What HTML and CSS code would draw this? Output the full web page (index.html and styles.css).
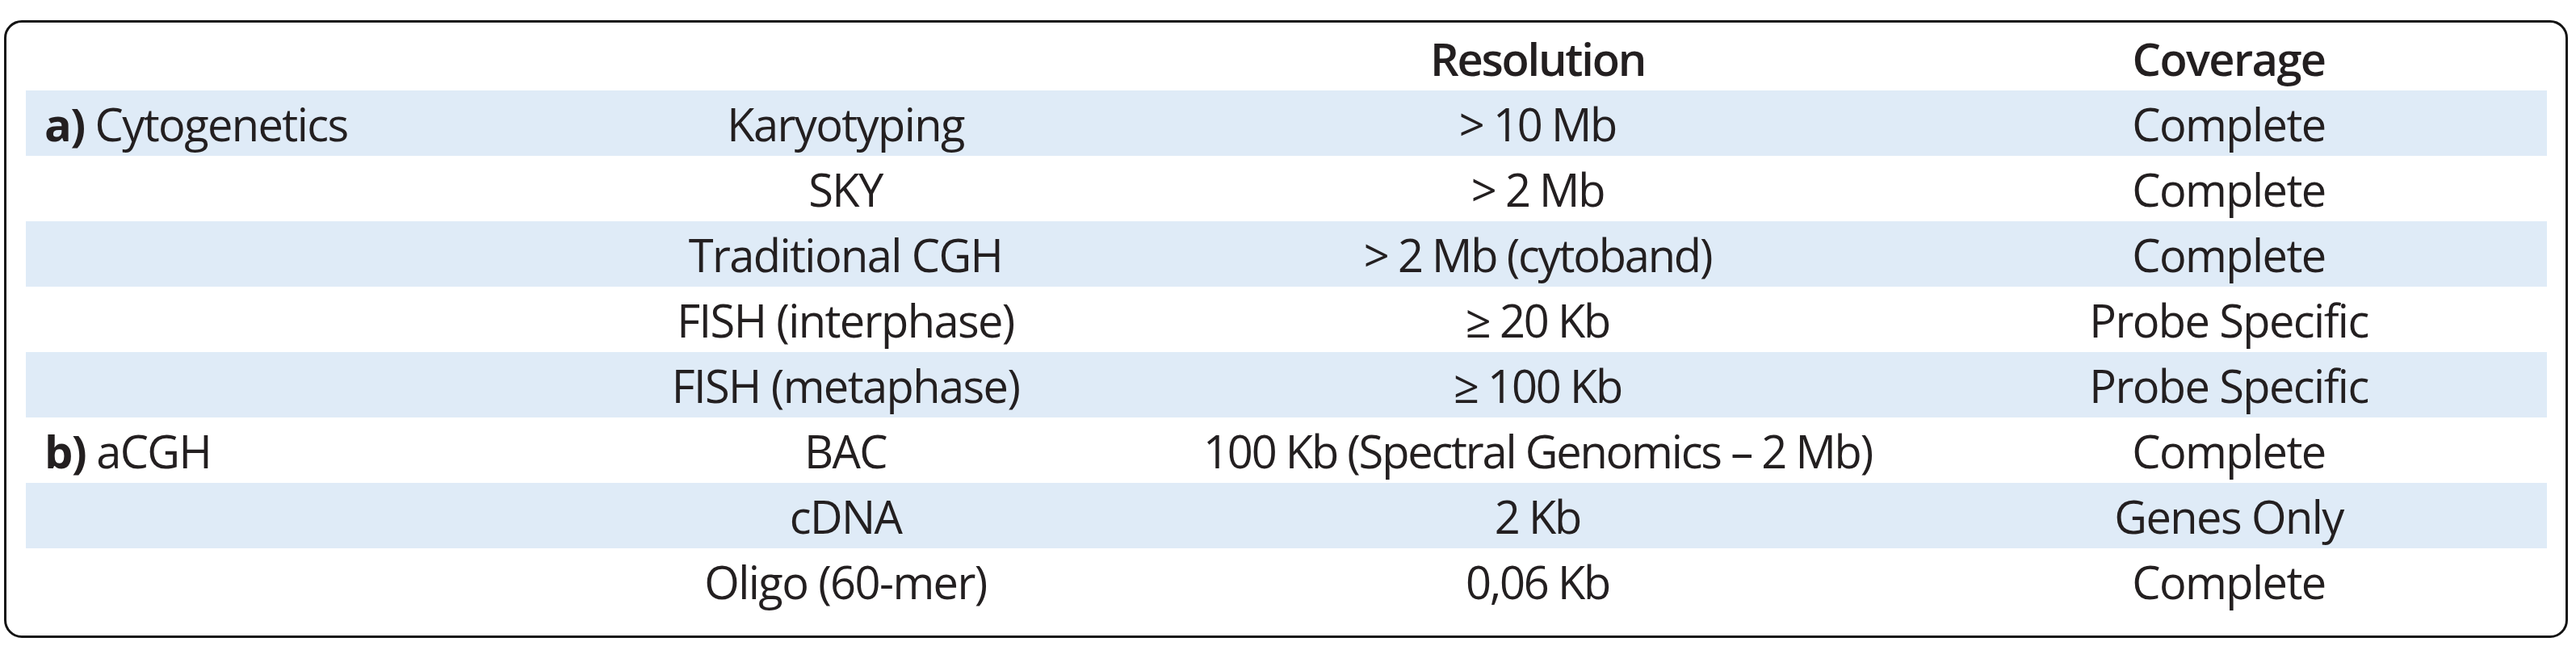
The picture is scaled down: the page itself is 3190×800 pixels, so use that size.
FILE: index.html
```html
<!DOCTYPE html>
<html lang="en">
<head>
<meta charset="utf-8">
<title>Resolution and coverage of techniques</title>
<link rel="stylesheet" href="styles.css">
</head>
<body>
<div class="frame">
  <table class="grid">
    <colgroup>
      <col class="c-group">
      <col class="c-tech">
      <col class="c-res">
      <col class="c-cov">
    </colgroup>
    <thead>
      <tr class="head">
        <th class="group"></th>
        <th class="tech"></th>
        <th class="res">Resolution</th>
        <th class="cov">Coverage</th>
      </tr>
    </thead>
    <tbody>
      <tr class="band">
        <td class="group"><b>a)</b> Cytogenetics</td>
        <td class="tech">Karyotyping</td>
        <td class="res">&gt; 10 Mb</td>
        <td class="cov">Complete</td>
      </tr>
      <tr>
        <td class="group"></td>
        <td class="tech">SKY</td>
        <td class="res">&gt; 2 Mb</td>
        <td class="cov">Complete</td>
      </tr>
      <tr class="band">
        <td class="group"></td>
        <td class="tech">Traditional CGH</td>
        <td class="res">&gt; 2 Mb (cytoband)</td>
        <td class="cov">Complete</td>
      </tr>
      <tr>
        <td class="group"></td>
        <td class="tech">FISH (interphase)</td>
        <td class="res">≥ 20 Kb</td>
        <td class="cov">Probe Specific</td>
      </tr>
      <tr class="band">
        <td class="group"></td>
        <td class="tech">FISH (metaphase)</td>
        <td class="res">≥ 100 Kb</td>
        <td class="cov">Probe Specific</td>
      </tr>
      <tr>
        <td class="group"><b>b)</b> aCGH</td>
        <td class="tech">BAC</td>
        <td class="res">100 Kb (Spectral Genomics – 2 Mb)</td>
        <td class="cov">Complete</td>
      </tr>
      <tr class="band">
        <td class="group"></td>
        <td class="tech">cDNA</td>
        <td class="res">2 Kb</td>
        <td class="cov">Genes Only</td>
      </tr>
      <tr>
        <td class="group"></td>
        <td class="tech">Oligo (60-mer)</td>
        <td class="res">0,06 Kb</td>
        <td class="cov">Complete</td>
      </tr>
    </tbody>
  </table>
</div>
</body>
</html>
```

FILE: styles.css
```css
html, body {
  margin: 0;
  padding: 0;
  background: #ffffff;
}

body {
  font-family: "Open Sans", "Noto Sans", "DejaVu Sans", sans-serif;
  color: #231f20;
}

.frame {
  box-sizing: border-box;
  width: 3175px;
  height: 765px;
  margin: 25px 0 0 5px;
  padding: 4px 21px 0 24px;
  border: 3px solid #141414;
  border-radius: 22px;
  background: #ffffff;
}

.grid {
  width: 3122px;
  table-layout: fixed;
  border-collapse: collapse;
  border-spacing: 0;
  font-size: 56px;
  letter-spacing: -1.6px;
}

.c-group { width: 600px; }
.c-tech  { width: 830px; }
.c-res   { width: 884px; }
.c-cov   { width: 808px; }

.grid th,
.grid td {
  height: 80px;
  padding: 0;
  line-height: 80px;
  white-space: nowrap;
  text-align: center;
  vertical-align: top;
}

.grid th {
  font-weight: 600;
}

.grid td {
  font-weight: 400;
  padding-top: 1px;
  box-sizing: border-box;
}

.grid .group {
  text-align: left;
  padding-left: 23px;
}

.grid .group b {
  font-weight: 700;
}

.grid .cov {
  padding-left: 20px;
}

.grid .res {
  letter-spacing: -2.2px;
}

.band {
  background: #dfebf7;
}
```
